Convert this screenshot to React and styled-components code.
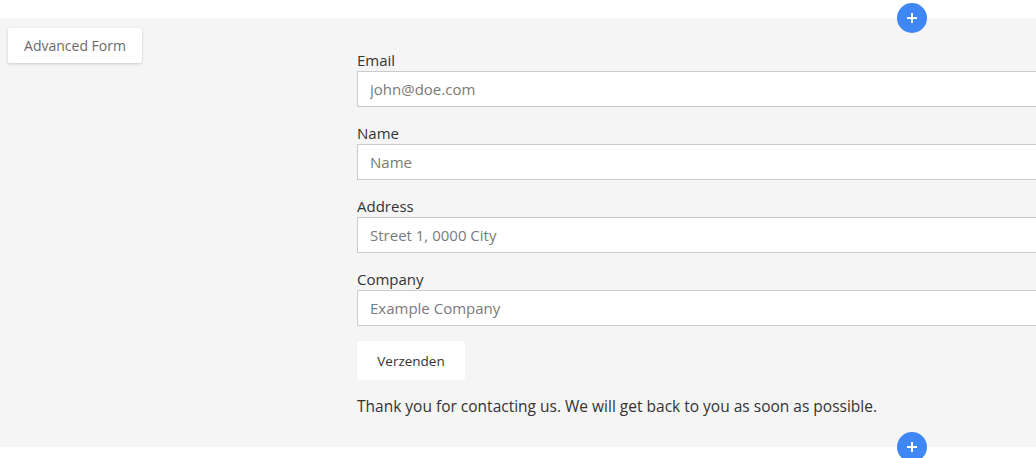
import React from 'react'
import styled, { createGlobalStyle } from 'styled-components'

const GlobalStyle = createGlobalStyle`
  html, body {
    margin: 0;
    padding: 0;
    background: #fff;
    overflow: hidden;
    font-family: "Open Sans", "Noto Sans", sans-serif;
  }
`;

const Page = styled.div`
  padding-top: 18px;
  width: 1036px;
  height: 458px;
  box-sizing: border-box;
  position: relative;
`;

const Section = styled.section`
  background: #f5f5f5;
  display: flex;
  padding: 10px 0 29px 8px;
  position: relative;
`;

const Side = styled.div`
  width: 349px;
  flex-shrink: 0;
`;

const BlockTag = styled.div`
  display: inline-flex;
  align-items: center;
  justify-content: center;
  width: 134px;
  height: 35px;
  box-sizing: border-box;
  background: #fff;
  border-radius: 2px;
  box-shadow: 0 1px 3px rgba(0, 0, 0, 0.18);
  color: #6b6b6b;
  font-size: 14px;
`;

const Form = styled.form`
  width: 720px;
  flex-shrink: 0;
  padding-top: 23px;
  display: flex;
  flex-direction: column;
`;

const Field = styled.div`
  display: flex;
  flex-direction: column;
  margin-bottom: 17px;
`;

const Label = styled.label`
  font-size: 15px;
  line-height: 19px;
  padding-bottom: 1px;
  color: #333;
`;

const Input = styled.input`
  height: 36px;
  box-sizing: border-box;
  border: 1px solid #cbcbcb;
  background: #fff;
  padding: 0 12px;
  font-family: inherit;
  font-size: 15px;
  color: #333;
  outline: none;
  &::placeholder {
    color: #7a7a7a;
  }
`;

const Submit = styled.button`
  align-self: flex-start;
  margin-top: -2px;
  width: 108px;
  height: 39px;
  border: none;
  border-radius: 3px;
  background: #fff;
  font-family: inherit;
  font-size: 13.5px;
  color: #333;
  cursor: pointer;
`;

const Thanks = styled.p`
  margin: 14px 0 0;
  font-size: 15.5px;
  line-height: 24px;
  color: #333;
`;

const AddButton = styled.button`
  position: absolute;
  left: 897px;
  top: ${p => (p.$bottom ? 'auto' : '-15px')};
  bottom: ${p => (p.$bottom ? '-15px' : 'auto')};
  width: 30px;
  height: 30px;
  border-radius: 50%;
  border: none;
  padding: 0;
  background: #3f87f5;
  display: flex;
  align-items: center;
  justify-content: center;
  z-index: 2;
`;

const Plus = () => (
  <svg width="12" height="12" viewBox="0 0 12 12">
    <path d="M6 1v10M1 6h10" stroke="#fff" strokeWidth="2" />
  </svg>
);

const fields = [
  { label: 'Email', placeholder: 'john@doe.com' },
  { label: 'Name', placeholder: 'Name' },
  { label: 'Address', placeholder: 'Street 1, 0000 City' },
  { label: 'Company', placeholder: 'Example Company' },
];

const App = () => {
  return (
    <Page>
      <GlobalStyle />
      <Section>
        <AddButton type="button"><Plus /></AddButton>
        <Side>
          <BlockTag>Advanced Form</BlockTag>
        </Side>
        <Form onSubmit={e => e.preventDefault()}>
          {fields.map(f => (
            <Field key={f.label}>
              <Label>{f.label}</Label>
              <Input placeholder={f.placeholder} />
            </Field>
          ))}
          <Submit type="submit">Verzenden</Submit>
          <Thanks>Thank you for contacting us. We will get back to you as soon as possible.</Thanks>
        </Form>
        <AddButton type="button" $bottom><Plus /></AddButton>
      </Section>
    </Page>
  )
}

export default App
